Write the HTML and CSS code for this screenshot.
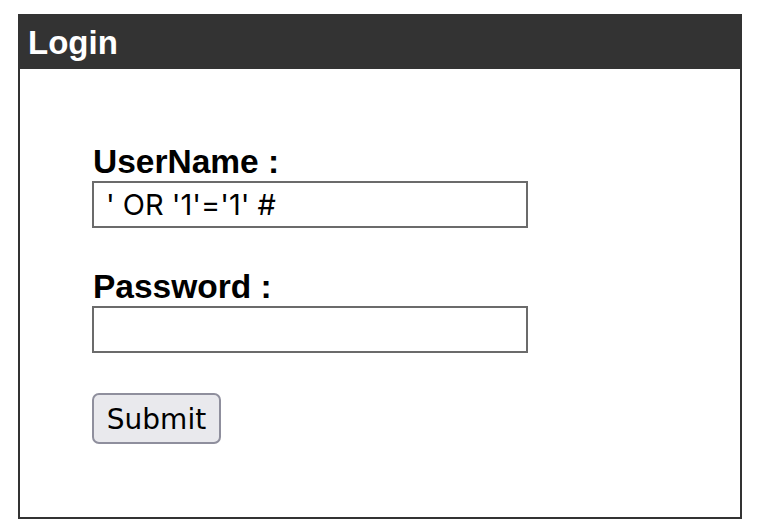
FILE: index.html
```html
<!DOCTYPE html>
<html>
<head>
<meta charset="utf-8">
<link rel="stylesheet" href="styles.css">
</head>
<body>
<div class="box">
  <div class="header">Login</div>
  <form class="form">
    <label class="label" for="u">UserName :</label>
    <input class="field" id="u" type="text" value="' OR '1'='1' #">
    <label class="label label-gap" for="p">Password :</label>
    <input class="field" id="p" type="password">
    <button class="submit" type="button">Submit</button>
  </form>
</div>
</body>
</html>
```
FILE: styles.css
```css
html, body {
  margin: 0;
  padding: 0;
  background: #fff;
}
body {
  padding: 14px 0 0 18px;
  font-family: "Liberation Sans", Arial, sans-serif;
}
.box {
  width: 720px;
  height: 501px;
  border: 2px solid #333;
  box-sizing: content-box;
}
.header {
  background: #333;
  color: #fff;
  font-weight: bold;
  font-size: 33px;
  height: 53px;
  line-height: 53px;
  padding-left: 8px;
}
.form {
  display: flex;
  flex-direction: column;
  align-items: flex-start;
  padding: 74px 0 0 72px;
  margin: 0;
}
.label {
  font-weight: bold;
  font-size: 33.5px;
  line-height: 38px;
  padding-left: 1px;
}
.label-gap {
  margin-top: 40px;
}
.field {
  width: 436px;
  height: 47px;
  box-sizing: border-box;
  border: 2px solid #6b6b6b;
  border-radius: 0;
  padding: 0 12px;
  margin: 0;
  font-family: Inter, "Liberation Sans", sans-serif;
  font-size: 29px;
  color: #000;
  background: #fff;
  outline: none;
}
.submit {
  margin-top: 40px;
  width: 129px;
  height: 51px;
  box-sizing: border-box;
  border: 2px solid #8f8f9d;
  border-radius: 7px;
  background: #e9e9ed;
  font-family: "DejaVu Sans", sans-serif;
  font-size: 28px;
  color: #000;
  padding: 2px 0 0;
}
```
